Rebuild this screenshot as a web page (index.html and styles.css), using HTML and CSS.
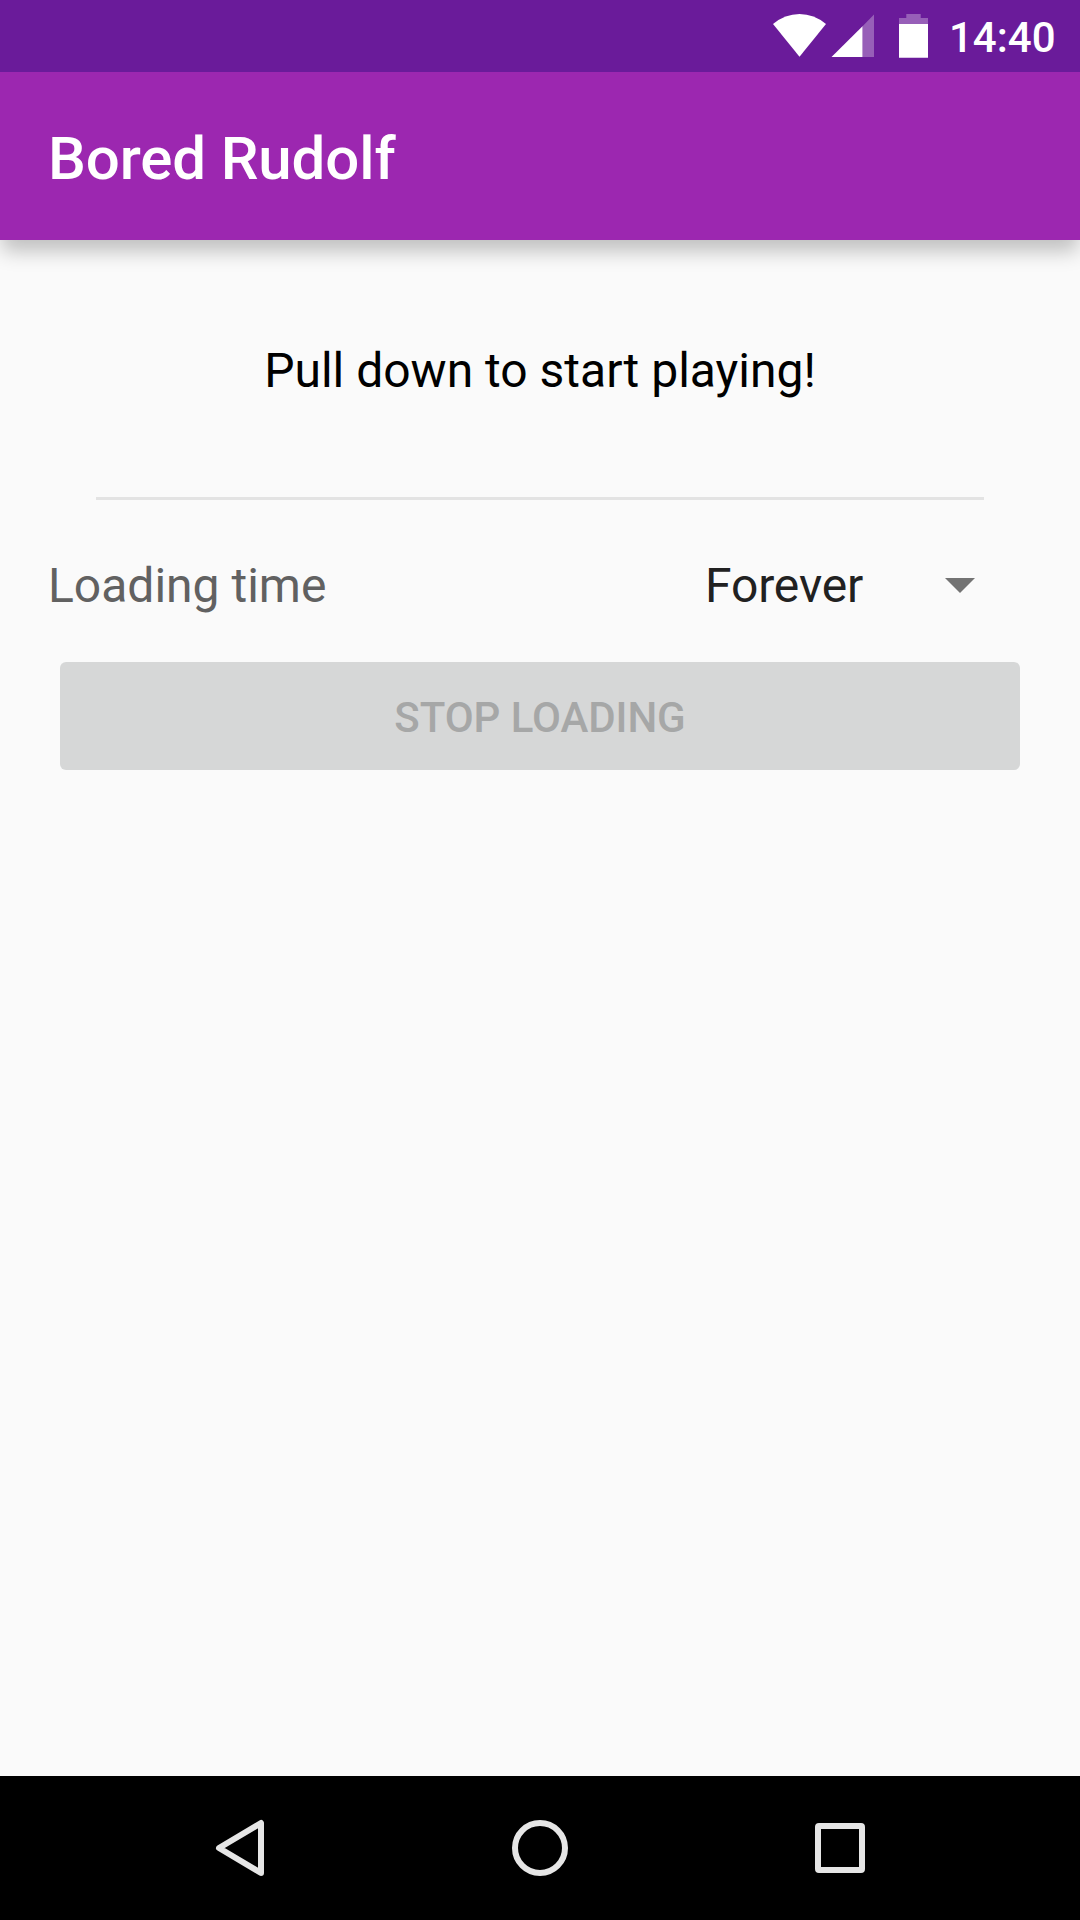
FILE: index.html
```html
<!DOCTYPE html>
<html lang="en">
<head>
<meta charset="utf-8">
<title>Bored Rudolf</title>
<link rel="stylesheet" href="styles.css">
</head>
<body>
<div class="status">
  <svg class="status-icons" width="170" height="72" viewBox="0 0 170 72">
    <path class="white" d="M3 24Q15 14 29.500 14T56 24L29.500 56.700Z"/>
    <path class="faint" d="M92.500 26.200L104 14.500V57H92.500Z"/>
    <path class="white" d="M61.500 57L92.500 26.200V57Z"/>
    <path class="faint" d="M136.300 14H150.700V18H158V24H129V18H136.300Z"/>
    <path class="white" d="M129 24H158V57.700H129Z"/>
  </svg>
  <span class="clock">14:40</span>
</div>
<header class="appbar"><h1>Bored Rudolf</h1></header>
<main class="content">
  <p class="hint">Pull down to start playing!</p>
  <hr class="divider">
  <div class="row">
    <span class="label">Loading time</span>
    <div class="spinner"><span>Forever</span>
      <svg width="30" height="16" viewBox="0 0 30 16"><path d="M0 0H30L15 15Z" fill="#737373"/></svg>
    </div>
  </div>
  <button class="stop" disabled>STOP LOADING</button>
</main>
<nav class="navbar">
  <svg width="1080" height="144" viewBox="0 0 1080 144">
    <path d="M261 47V97L219 72Z"/>
    <circle cx="540" cy="72" r="25"/>
    <rect x="818" y="50" width="44" height="44" rx="1"/>
  </svg>
</nav>
</body>
</html>
```
FILE: styles.css
```css
* { box-sizing: border-box; }
body { margin: 0; width: 1080px; height: 1920px; display: flex; flex-direction: column; background: #fafafa; font-family: Roboto, sans-serif; overflow: hidden; }
.status { position: relative; z-index: 1; height: 72px; flex: none; display: flex; justify-content: flex-end; background: #6a1b9a; color: #fff; padding-right: 24px; }
.status-icons { flex: none; margin-right: 9px; }
.white { fill: #fff; }
.faint { fill: #fff; fill-opacity: .3; }
.clock { width: 107px; white-space: nowrap; font-size: 42px; font-weight: 500; line-height: 75px; }
.appbar { height: 168px; flex: none; display: flex; align-items: center; padding: 6px 48px 0; background: #9c27b0; color: #fff; box-shadow: 0 13px 19px -2px rgba(0,0,0,.24); }
h1 { margin: 0; font-size: 60px; font-weight: 500; line-height: 70px; letter-spacing: -.12px; }
.content { flex: 1; padding: 96px 48px 0; }
.hint { margin: 0; text-align: center; font-size: 48px; line-height: 70px; color: #000; }
.divider { margin: 91px 48px 0; height: 3px; border: 0; background: #e3e3e3; }
.row { display: flex; justify-content: space-between; align-items: center; height: 144px; margin-top: 14px; font-size: 48px; line-height: 56px; }
.label { color: #616161; }
.spinner { display: flex; align-items: center; justify-content: space-between; width: 270px; margin-right: 57px; color: #212121; letter-spacing: -.12px; }
.stop { display: block; width: 960px; height: 108px; margin: 4px 12px 0; padding: 3px 0 0; border: 0; border-radius: 6px; background: #d6d7d7; color: #a6a7a7; font: 500 42px Roboto, sans-serif; letter-spacing: -.06px; }
.navbar { height: 144px; flex: none; background: #000; }
.navbar svg { display: block; fill: none; stroke: #e6e6e6; stroke-width: 6; stroke-linejoin: round; }
```
